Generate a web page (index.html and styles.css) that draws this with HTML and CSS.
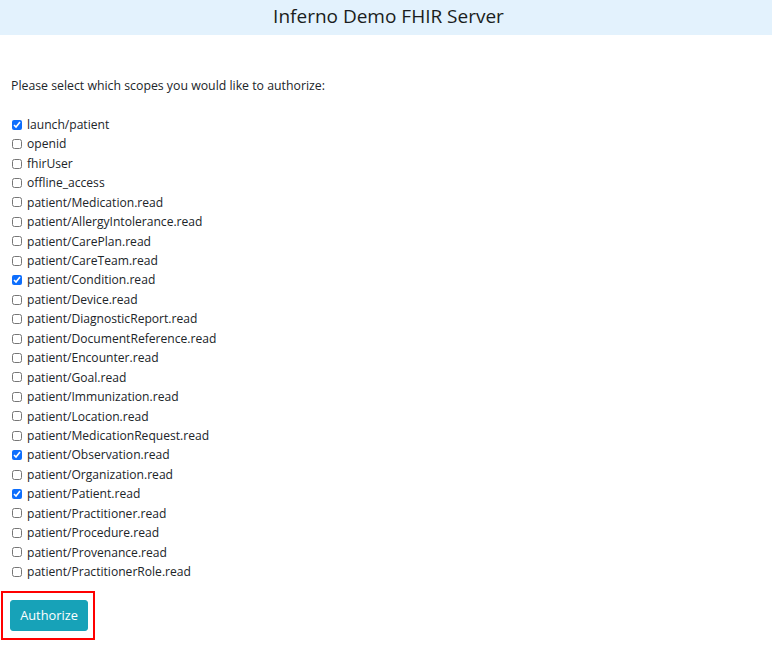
FILE: index.html
```html
<!DOCTYPE html>
<html lang="en">
<head>
<meta charset="utf-8">
<title>Inferno Demo FHIR Server</title>
<link rel="stylesheet" href="styles.css">
</head>
<body>
<header class="banner">
  <h1 class="banner-title">Inferno Demo FHIR Server</h1>
</header>
<main class="content">
  <form class="scope-form">
    <p class="intro">Please select which scopes you would like to authorize:</p>
    <ul class="scope-list">
      <li class="scope"><input type="checkbox" checked><span>launch/patient</span></li>
      <li class="scope"><input type="checkbox"><span>openid</span></li>
      <li class="scope"><input type="checkbox"><span>fhirUser</span></li>
      <li class="scope"><input type="checkbox"><span>offline_access</span></li>
      <li class="scope"><input type="checkbox"><span>patient/Medication.read</span></li>
      <li class="scope"><input type="checkbox"><span>patient/AllergyIntolerance.read</span></li>
      <li class="scope"><input type="checkbox"><span>patient/CarePlan.read</span></li>
      <li class="scope"><input type="checkbox"><span>patient/CareTeam.read</span></li>
      <li class="scope"><input type="checkbox" checked><span>patient/Condition.read</span></li>
      <li class="scope"><input type="checkbox"><span>patient/Device.read</span></li>
      <li class="scope"><input type="checkbox"><span>patient/DiagnosticReport.read</span></li>
      <li class="scope"><input type="checkbox"><span>patient/DocumentReference.read</span></li>
      <li class="scope"><input type="checkbox"><span>patient/Encounter.read</span></li>
      <li class="scope"><input type="checkbox"><span>patient/Goal.read</span></li>
      <li class="scope"><input type="checkbox"><span>patient/Immunization.read</span></li>
      <li class="scope"><input type="checkbox"><span>patient/Location.read</span></li>
      <li class="scope"><input type="checkbox"><span>patient/MedicationRequest.read</span></li>
      <li class="scope"><input type="checkbox" checked><span>patient/Observation.read</span></li>
      <li class="scope"><input type="checkbox"><span>patient/Organization.read</span></li>
      <li class="scope"><input type="checkbox" checked><span>patient/Patient.read</span></li>
      <li class="scope"><input type="checkbox"><span>patient/Practitioner.read</span></li>
      <li class="scope"><input type="checkbox"><span>patient/Procedure.read</span></li>
      <li class="scope"><input type="checkbox"><span>patient/Provenance.read</span></li>
      <li class="scope"><input type="checkbox"><span>patient/PractitionerRole.read</span></li>
    </ul>
    <div class="highlight">
      <button type="button" class="btn-authorize">Authorize</button>
    </div>
  </form>
</main>
</body>
</html>
```

FILE: styles.css
```css
html, body {
  margin: 0;
  padding: 0;
  background: #ffffff;
}
body {
  font-family: "Open Sans", "Noto Sans", sans-serif;
  font-size: 12.3px;
  line-height: 19.5px;
  color: #212529;
}
.banner {
  background: #e3f2fd;
  height: 35px;
  display: flex;
  align-items: center;
  justify-content: center;
}
.banner-title {
  margin: 0;
  font-size: 19px;
  font-weight: 500;
  color: #1a1d20;
  line-height: 24px;
  padding: 0 0 3px 5px;
}
.content {
  padding: 41px 11px 0 11px;
}
.intro {
  margin: 0 0 19.5px 0;
}
.scope-list {
  list-style: none;
  margin: 0;
  padding: 0;
}
.scope {
  display: flex;
  align-items: center;
  gap: 5px;
  height: 19.45px;
  font-size: 12.1px;
}
.scope input {
  width: 10px;
  height: 10px;
  margin: 0 0 0 1px;
  accent-color: #0d6efd;
}
.highlight {
  margin: 9px 0 0 -10px;
  width: 94px;
  height: 49px;
  border: 2px solid #ff0000;
  box-sizing: border-box;
  display: flex;
  align-items: flex-start;
  padding: 7px 0 0 7px;
}
.btn-authorize {
  background: #17a2b8;
  color: #ffffff;
  border: 1px solid #17a2b8;
  border-radius: 3px;
  font-family: inherit;
  font-size: 12.8px;
  width: 78px;
  height: 31px;
  padding: 0;
}
```
